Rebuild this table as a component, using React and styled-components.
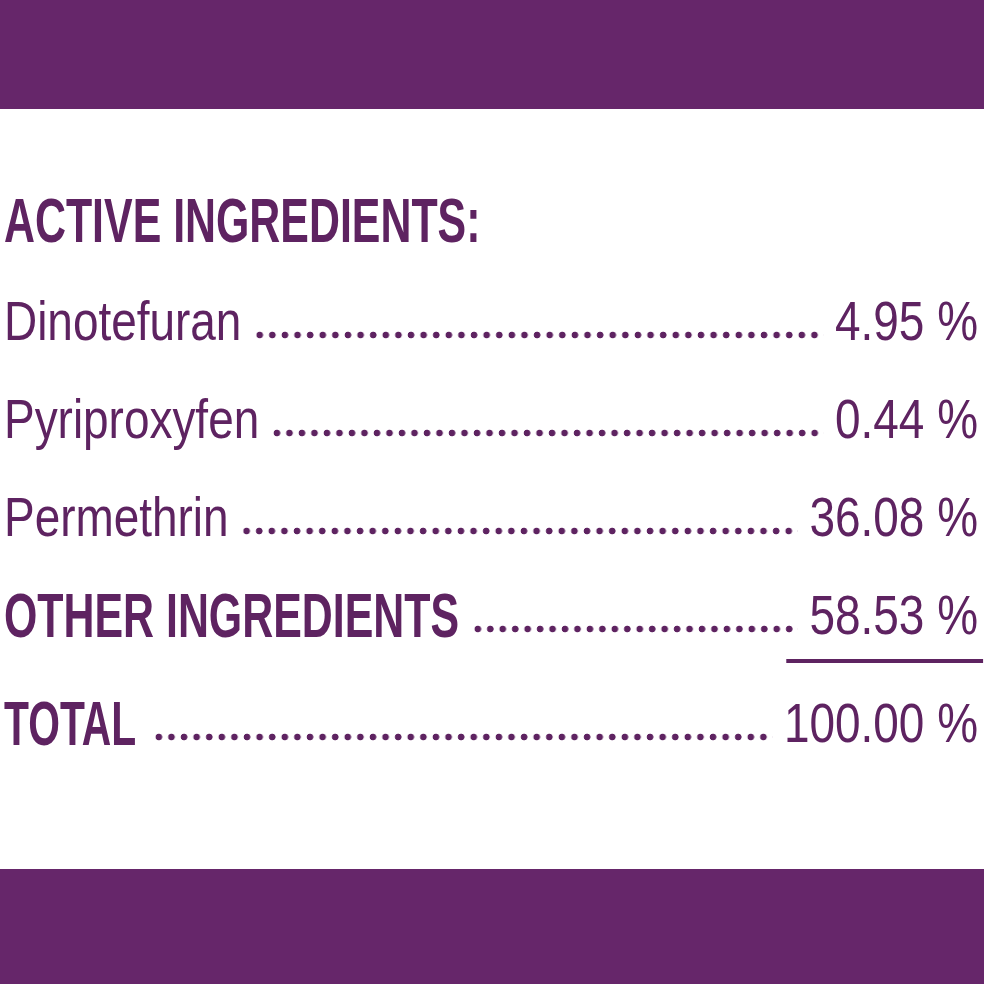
import React from 'react';
import styled, { createGlobalStyle } from 'styled-components';

const GlobalStyle = createGlobalStyle`
  html, body {
    margin: 0;
    padding: 0;
    background: #ffffff;
  }
`;

const PURPLE = '#66266a';
const INK = '#5e2361';
// the label face is a condensed one; squeeze Liberation Sans to match
const NARROW = 0.82;

const Page = styled.div`
  width: 984px;
  height: 984px;
  display: flex;
  flex-direction: column;
  background: #ffffff;
  font-family: "Liberation Sans", Arial, sans-serif;
  color: ${INK};
  overflow: hidden;
`;

const Band = styled.div`
  flex: none;
  height: ${props => props.$height}px;
  background-color: ${PURPLE};
`;

const Panel = styled.div`
  flex: 1;
  padding: 71px 0 0 4px;
  overflow: hidden;
`;

const Sheet = styled.div`
  width: ${974 / NARROW}px;
  transform: scaleX(${NARROW});
  transform-origin: left top;
`;

const Heading = styled.h1`
  margin: 0 0 12px;
  font-size: 63px;
  line-height: 80px;
  font-weight: 700;
  white-space: nowrap;
`;

const Squeeze = styled.span`
  display: inline-block;
  transform: scaleX(${props => props.$scale || 0.83});
  transform-origin: left center;
  white-space: nowrap;
`;

const Row = styled.div`
  display: flex;
  align-items: flex-start;
  height: 98px;
  font-size: 56px;
  line-height: 98px;
  white-space: nowrap;
`;

const Name = styled.span`
  flex: none;
`;

const BoldName = styled.span`
  flex: none;
  width: ${props => props.$width / NARROW}px;
  font-size: 63px;
  font-weight: 700;
`;

const Leader = styled.span`
  flex: 1;
  height: 8px;
  margin: 59px ${12 / NARROW}px 0 ${14 / NARROW}px;
  background-image: radial-gradient(
    ${3.7 / NARROW}px 3.7px at ${4 / NARROW}px 4px,
    ${INK} 80%,
    transparent 100%
  );
  background-size: ${12.6 / NARROW}px 8px;
  background-repeat: round no-repeat;
`;

const Amount = styled.span`
  flex: none;
`;

const Rule = styled.div`
  height: 4px;
  width: ${197 / NARROW}px;
  margin: -5px ${-5 / NARROW}px 11px auto;
  background-color: ${INK};
`;

const actives = [
  { name: 'Dinotefuran', amount: '4.95 %' },
  { name: 'Pyriproxyfen', amount: '0.44 %' },
  { name: 'Permethrin', amount: '36.08 %' },
];

export default function App() {
  return (
    <Page>
      <GlobalStyle />
      <Band $height={109} />
      <Panel>
        <Sheet>
          <Heading>
            <Squeeze>ACTIVE INGREDIENTS:</Squeeze>
          </Heading>
          {actives.map(item => (
            <Row key={item.name}>
              <Name>{item.name}</Name>
              <Leader />
              <Amount>{item.amount}</Amount>
            </Row>
          ))}
          <Row>
            <BoldName $width={456}>
              <Squeeze>OTHER INGREDIENTS</Squeeze>
            </BoldName>
            <Leader />
            <Amount>58.53 %</Amount>
          </Row>
          <Rule />
          <Row>
            <BoldName $width={137}>
              <Squeeze $scale={0.79}>TOTAL</Squeeze>
            </BoldName>
            <Leader />
            <Amount>100.00 %</Amount>
          </Row>
        </Sheet>
      </Panel>
      <Band $height={115} />
    </Page>
  );
}
